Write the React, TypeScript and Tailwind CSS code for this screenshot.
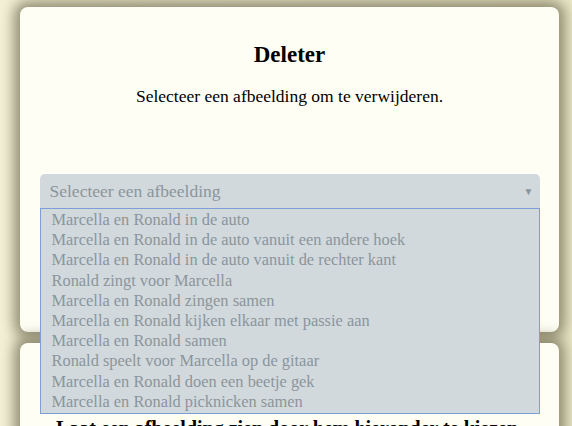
import React from 'react';

const images = [
  'Marcella en Ronald in de auto',
  'Marcella en Ronald in de auto vanuit een andere hoek',
  'Marcella en Ronald in de auto vanuit de rechter kant',
  'Ronald zingt voor Marcella',
  'Marcella en Ronald zingen samen',
  'Marcella en Ronald kijken elkaar met passie aan',
  'Marcella en Ronald samen',
  'Ronald speelt voor Marcella op de gitaar',
  'Marcella en Ronald doen een beetje gek',
  'Marcella en Ronald picknicken samen',
];

export default function App() {
  return (
    <div className="min-h-screen h-[426px] overflow-hidden bg-[linear-gradient(90deg,#f4f1d6_0%,#ece8c8_100%)] font-['Liberation_Serif',serif]">
      <div className="pt-[7px] pl-[20px] flex flex-col gap-[11px]">
        <div className="w-[539px] h-[325px] rounded-[8px] bg-[#fefef4] shadow-[0_0_14px_6px_rgba(110,105,80,0.75)] px-[20px] flex flex-col items-center">
          <h1 className="mt-[34px] text-[23px] font-bold leading-[28px] text-black">Deleter</h1>
          <p className="mt-[16px] text-[17.5px] leading-[22px] text-black">Selecteer een afbeelding om te verwijderen.</p>
          <div className="relative mt-[67px] w-[500px]">
            <div className="h-[34px] rounded-t-[5px] bg-[#d2d9dd] flex items-center justify-between pl-[10px] pr-[6px]">
              <span className="text-[17.5px] text-[#8b959c]">Selecteer een afbeelding</span>
              <span className="text-[10px] text-[#8b959c]">▼</span>
            </div>
            <ul className="absolute top-[34px] left-0 w-[500px] z-10 border border-[#7d9ed6] bg-[#d2d9dd] py-px pl-[11px]">
              {images.map((name) => (
                <li key={name} className="h-[20.2px] leading-[20px] text-[16.4px] text-[#8b959c]">
                  {name}
                </li>
              ))}
            </ul>
          </div>
        </div>
        <div className="w-[539px] h-[200px] rounded-[8px] bg-[#fefef4] shadow-[0_0_14px_6px_rgba(110,105,80,0.75)] px-[20px] pt-[73px] text-center">
          <p className="text-[20px] font-bold leading-[24px] text-black">Laat een afbeelding zien door hem hieronder te kiezen.</p>
        </div>
      </div>
    </div>
  );
}
